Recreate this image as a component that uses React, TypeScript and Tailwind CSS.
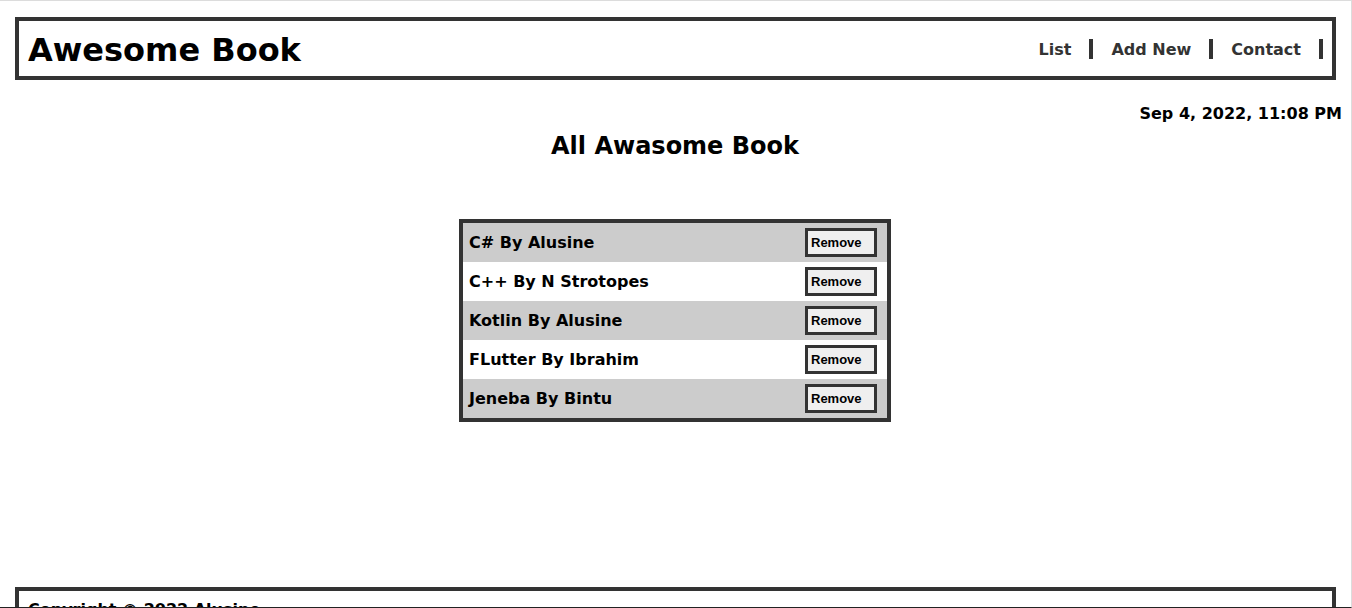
const books = [
  { title: "C#", author: "Alusine" },
  { title: "C++", author: "N Strotopes" },
  { title: "Kotlin", author: "Alusine" },
  { title: "FLutter", author: "Ibrahim" },
  { title: "Jeneba", author: "Bintu" },
];

const links = ["List", "Add New", "Contact"];

export default function App() {
  return (
    <div className="h-[608px] overflow-hidden border-t border-r border-b border-t-[#dcdcdc] border-r-[#dcdcdc] border-b-[#222] bg-white font-['DejaVu_Sans',sans-serif] font-bold text-black">
      {/* Header */}
      <header className="mx-[15px] mt-[16px] flex h-[63px] items-center justify-between border-4 border-[#333] pl-[9px] pr-[9px]">
        <h1 className="pt-[4px] text-[32px] leading-[37px]">Awesome Book</h1>
        <nav>
          <ul className="flex">
            {links.map((link) => (
              <li
                key={link}
                className="h-[20px] border-r-4 border-[#333] px-[18px] text-[16px] leading-[22px] text-[#333]"
              >
                <a href="#">{link}</a>
              </li>
            ))}
          </ul>
        </nav>
      </header>

      {/* Date */}
      <p className="mt-[24px] pr-[9px] text-right text-[16px] leading-[19px]">
        Sep 4, 2022, 11:08 PM
      </p>

      {/* Books */}
      <main className="pr-px">
        <h2 className="mt-[9px] text-center text-[24px] leading-[28px]">All Awasome Book</h2>

        <ul className="mx-auto mt-[59px] w-[432px] border-4 border-[#333]">
          {books.map((book, index) => (
            <li
              key={index}
              className={`flex h-[39px] items-center justify-between pl-[6px] pr-[10px] text-[16px] ${
                index % 2 === 0 ? "bg-[#ccc]" : "bg-white"
              }`}
            >
              <span>
                {book.title} By {book.author}
              </span>
              <button className="h-[29px] w-[72px] border-[3px] border-[#333] bg-[#efefef] pl-[3px] text-left font-['Liberation_Sans',sans-serif] text-[13px] leading-[15px]">
                Remove
              </button>
            </li>
          ))}
        </ul>
      </main>

      {/* Footer */}
      <footer className="mx-[15px] mt-[165px] border-4 border-[#333] px-[9px] pt-[9px] pb-[6px]">
        <p className="text-[16px] leading-[19px]">Copyright © 2022 Alusine</p>
      </footer>
    </div>
  );
}
